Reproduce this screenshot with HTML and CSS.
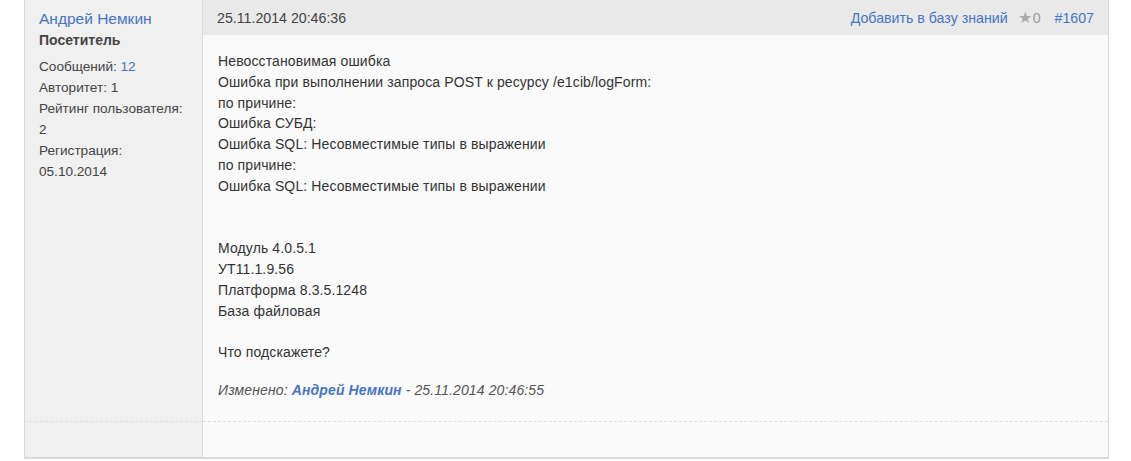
FILE: index.html
```html
<!DOCTYPE html>
<html lang="ru">
<head>
<meta charset="utf-8">
<link rel="stylesheet" href="styles.css">
</head>
<body>
<div class="page">
  <div class="post">
    <div class="author">
      <a class="author-name" href="#">Андрей Немкин</a>
      <div class="author-status">Посетитель</div>
      <div class="author-info">
        <div>Сообщений: <a href="#">12</a></div>
        <div>Авторитет: 1</div>
        <div>Рейтинг пользователя:</div>
        <div>2</div>
        <div>Регистрация:</div>
        <div>05.10.2014</div>
      </div>
    </div>
    <div class="main">
      <div class="head">
        <span class="date">25.11.2014 20:46:36</span>
        <span class="actions">
          <a href="#">Добавить в базу знаний</a>
          <span class="rating"><span class="star">★</span>0</span>
          <a href="#" class="num">#1607</a>
        </span>
      </div>
      <div class="body">
        <div class="text">Невосстановимая ошибка<br>Ошибка при выполнении запроса POST к ресурсу /e1cib/logForm:<br>по причине:<br>Ошибка СУБД:<br>Ошибка SQL: Несовместимые типы в выражении<br>по причине:<br>Ошибка SQL: Несовместимые типы в выражении<br><br><br>Модуль 4.0.5.1<br>УТ11.1.9.56<br>Платформа 8.3.5.1248<br>База файловая<br><br>Что подскажете?</div>
        <div class="edited">Изменено: <a href="#">Андрей Немкин</a> - 25.11.2014 20:46:55</div>
      </div>
    </div>
    <div class="foot-left"></div>
    <div class="foot-right"></div>
  </div>
  <div class="next"></div>
</div>
</body>
</html>
```
FILE: styles.css
```css
html, body {
  margin: 0;
  padding: 0;
  background: #fff;
}
body {
  font-family: "Liberation Sans", Arial, sans-serif;
  font-size: 14px;
  color: #333;
}
a {
  color: #4575c4;
  text-decoration: none;
}
.page {
  margin-left: 24px;
  width: 1085px;
}
.post {
  display: grid;
  grid-template-columns: 178px 1fr;
  grid-template-rows: auto 36px;
  border: 1px solid #d9d9d9;
  border-top: none;
  border-bottom: 2px solid #d9d9d9;
}
.author {
  background: #f0f0f0;
  border-right: 1px solid #dcdcdc;
  padding: 8px 10px 0 14px;
  line-height: 21px;
}
.author-name {
  display: block;
  font-size: 15.5px;
}
.author-status {
  font-weight: bold;
  color: #444;
  margin-top: 1px;
}
.author-info {
  margin-top: 5px;
  font-size: 13.6px;
  color: #444;
}
.main {
  background: #fafafa;
  display: flex;
  flex-direction: column;
}
.head {
  background: #e9e9e9;
  height: 35px;
  display: flex;
  align-items: center;
  justify-content: space-between;
  padding: 0 14px;
  color: #444;
  font-size: 14.2px;
}
.actions {
  display: flex;
  align-items: center;
  gap: 10px;
}
.rating {
  color: #999;
  margin-right: 4px;
}
.star {
  color: #aaa;
  font-size: 16px;
  margin-right: 1px;
}
.body {
  padding: 16px 14px 20px 15px;
  line-height: 20.8px;
  letter-spacing: 0.12px;
}
.edited {
  margin-top: 17px;
  font-style: italic;
  color: #555;
}
.edited a {
  font-weight: bold;
}
.foot-left {
  background: #f0f0f0;
  border-right: 1px solid #dcdcdc;
  border-top: 1px dashed #dedede;
}
.foot-right {
  background: #fafafa;
  border-top: 1px dashed #dedede;
}
.next {
  margin-top: 2px;
  height: 4px;
  background: #f0f0f0;
  border-left: 1px solid #d9d9d9;
  border-top: 1px solid #e4e4e4;
}
```
